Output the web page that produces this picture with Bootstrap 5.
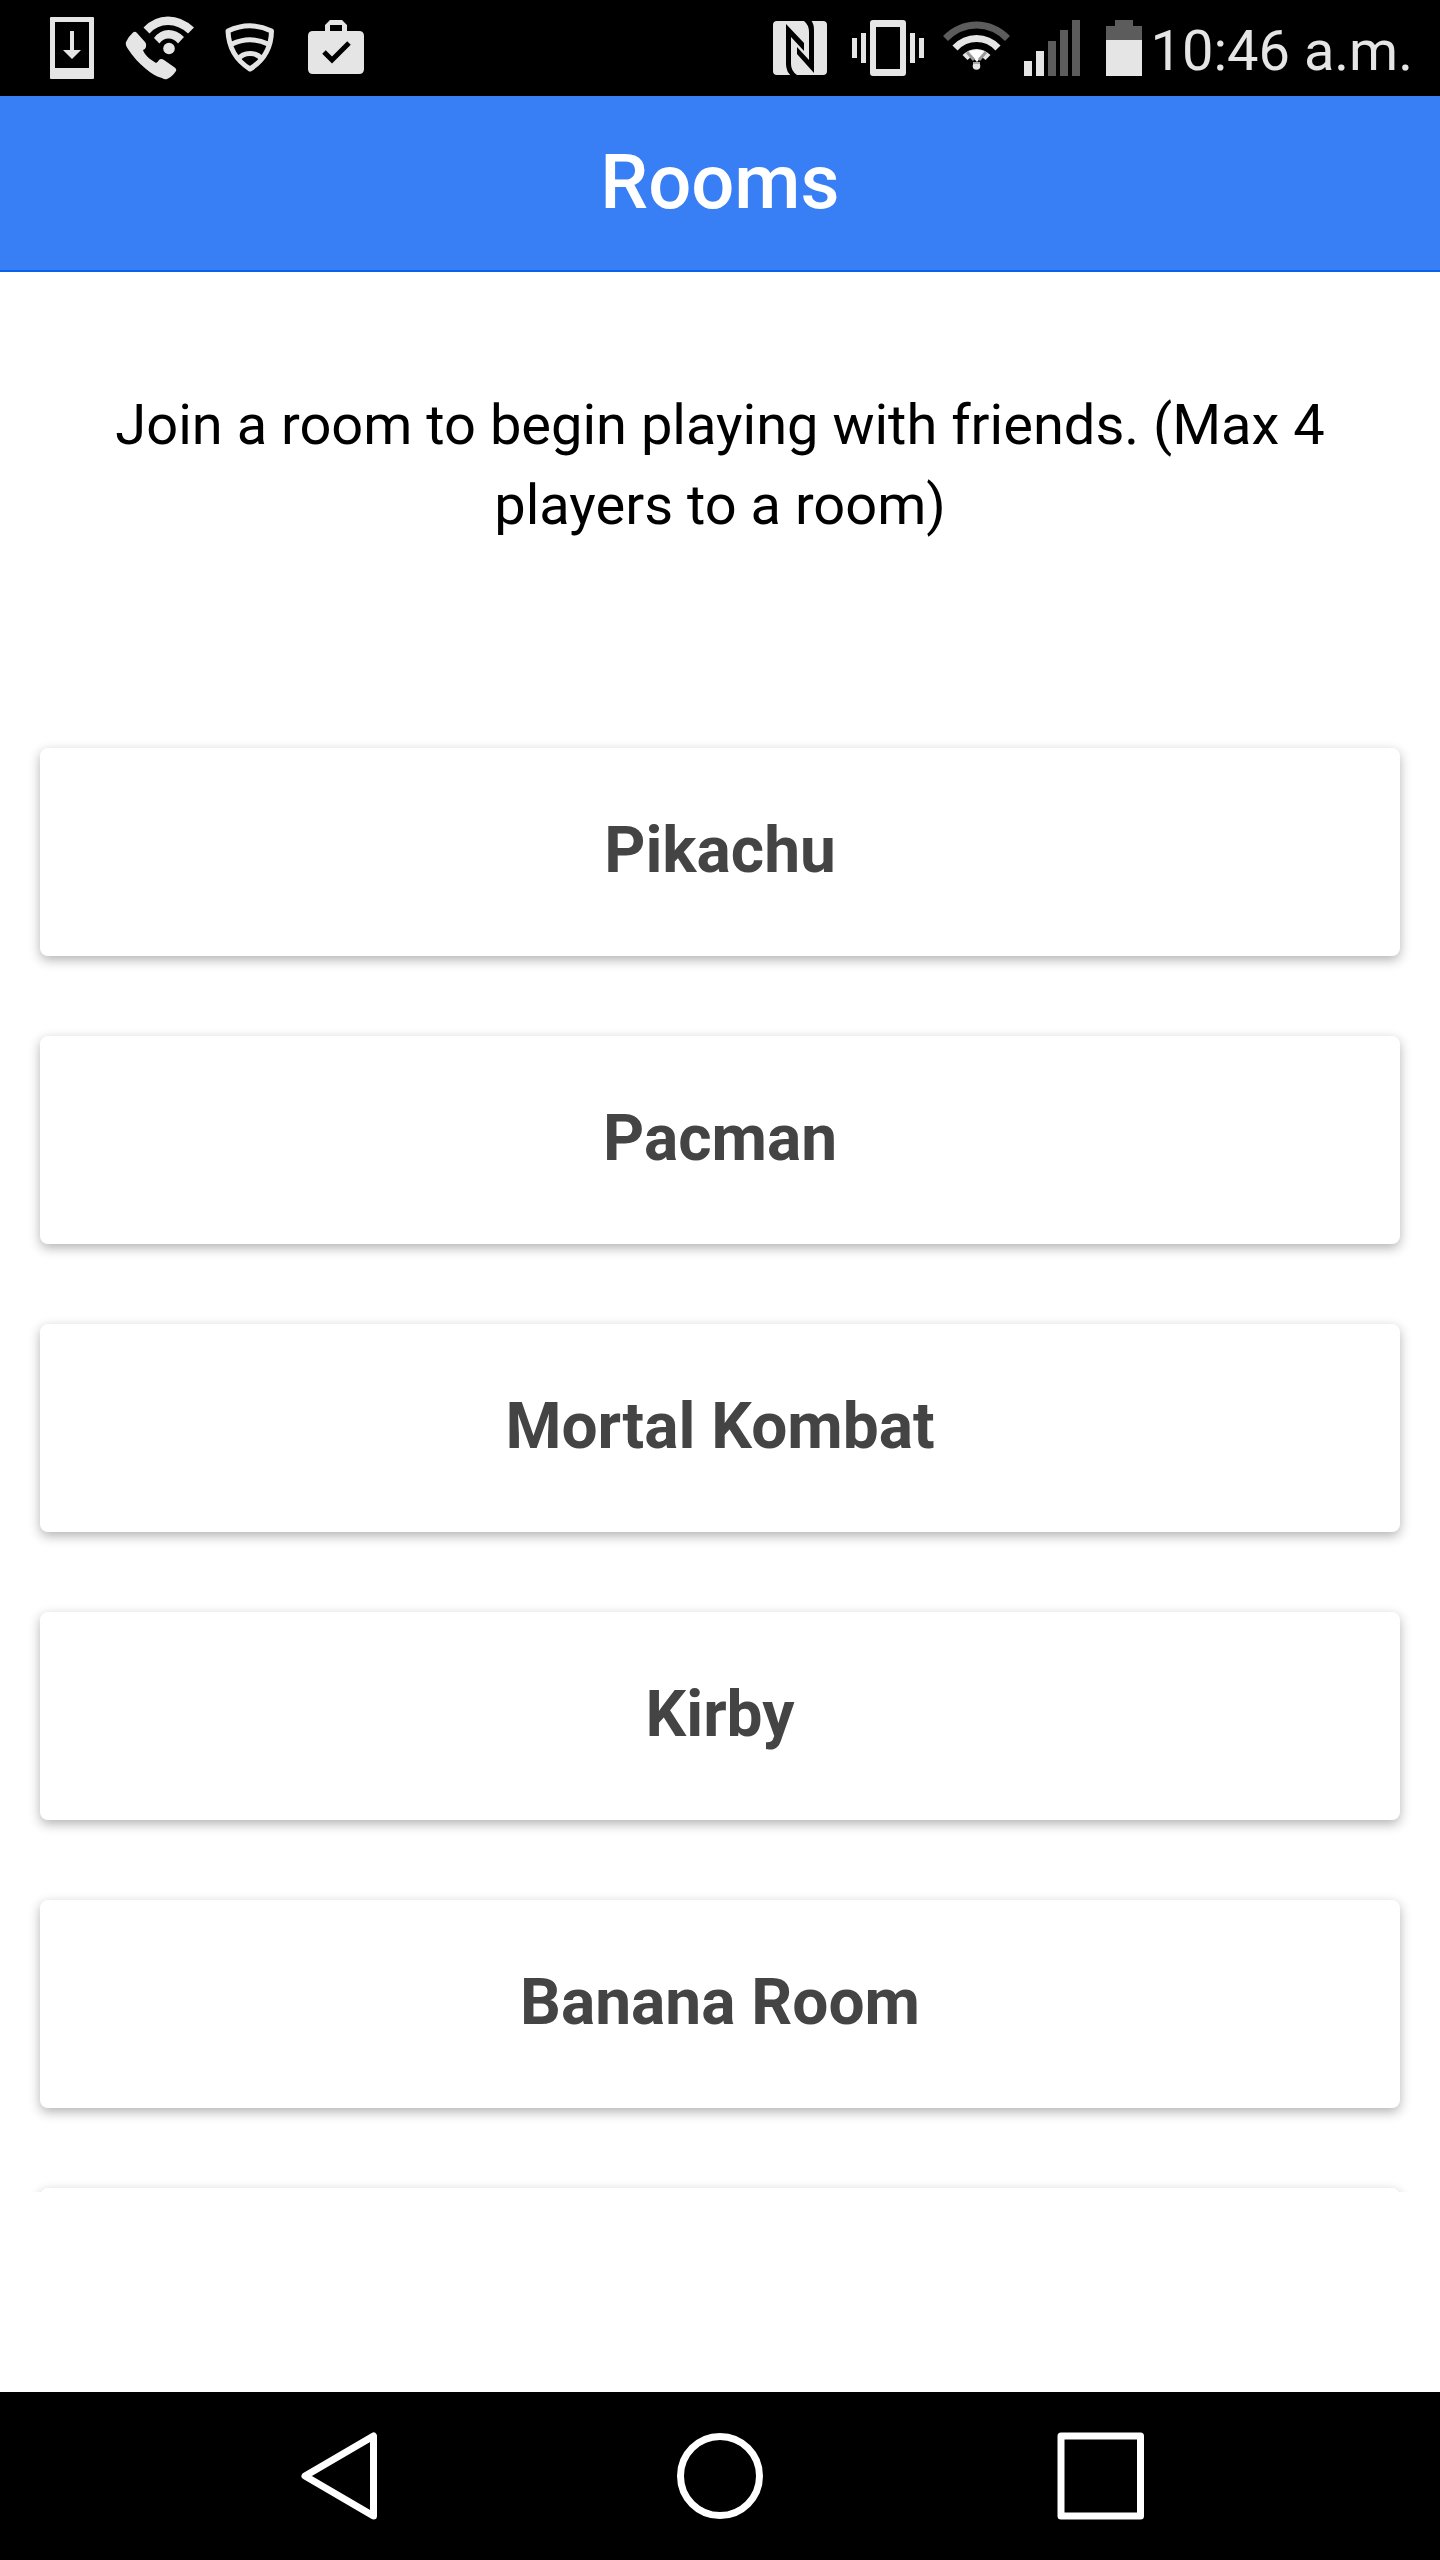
<!DOCTYPE html>
<html lang="en">
<head>
<meta charset="utf-8">
<meta name="viewport" content="width=device-width, initial-scale=1">
<title>Rooms</title>
<link href="https://cdn.jsdelivr.net/npm/bootstrap@5.3.0/dist/css/bootstrap.min.css" rel="stylesheet">
<style>
body { font-family: Roboto, "Noto Sans", sans-serif; background: #fff; color: #000; }
.status-bar { height: 96px; background: #000; color: #e5e5e5; padding: 0 27px 0 50px; }
.status-bar svg { display: block; flex: none; overflow: visible; }
.status-left { gap: 32px; }
.status-right { gap: 16px; }
.clock { font-size: 56px; line-height: 64px; margin-left: 7px; padding-top: 6px; }
.title-bar { height: 176px; background: #387ef5; border-bottom: 2px solid #0c60ee; padding-bottom: 2px; }
.page-title { font-size: 76px; line-height: 84px; font-weight: 500; color: #fff; }
.room-list { min-height: 0; }
.intro { font-size: 56px; line-height: 80px; padding: 113px 80px 203px; }
.rooms { gap: 80px; padding: 0 40px; }
.room-btn { min-height: 208px; border: 0; border-radius: 8px; background: #fff; color: #444; font-size: 64px; line-height: 80px; font-weight: 700; padding: 0 0 3px; box-shadow: 0 4px 12px rgba(0,0,0,.3); }
.blank-footer { height: 200px; background: #fff; }
.soft-keys { height: 168px; background: #000; padding: 0 284px; }
.soft-keys button { width: 112px; height: 112px; }
.soft-keys svg { display: block; fill: none; stroke: #fff; stroke-width: 7; stroke-linejoin: round; }
</style>
<script src="https://cdn.jsdelivr.net/npm/bootstrap@5.3.0/dist/js/bootstrap.bundle.min.js" defer></script>
</head>
<body class="d-flex flex-column vh-100 overflow-hidden">
<div class="status-bar d-flex align-items-center justify-content-between flex-shrink-0">
  <div class="status-left d-flex">
    <svg width="44" height="96" viewBox="50 0 44 96" fill="#e5e5e5" aria-hidden="true"><path fill-rule="evenodd" d="M51 17h42q1 0 1 1v60q0 1-1 1H51q-1 0-1-1V18q0-1 1-1zM55 22v46h34V22z"/><path d="M70 31h4v19h7l-9 9-9-9h7z"/></svg>
    <svg width="68" height="96" viewBox="126 0 68 96" fill="#e5e5e5" aria-hidden="true"><path d="M133 32.500Q135 31 137 33L145 42Q147 44 146 47Q145 50 143 50Q144 54 150 59L156 63Q158 62 159 60Q161 58 164 60L174 67Q177 69 176 71Q172 77 167 79Q165 80 162 78Q154 76 146 69Q135 60 128 49Q125 45 126 42Q128 37 133 32.500z"/><circle cx="169" cy="48.500" r="5.800"/><path d="M143.500 27.500Q154 16.500 168 16.500Q182 16.500 194 27.500L188 33.500Q179 25 168 25Q157 25 149.500 33.500zM154 38Q160 30 168.500 30Q177 30 184 37L178 43.500Q174 38.500 168.500 38.500Q163 38.500 159.500 43.500z"/></svg>
    <svg width="48" height="96" viewBox="225 0 48 96" fill="none" stroke="#e5e5e5" stroke-width="5" stroke-linejoin="round" aria-hidden="true"><path d="M227 31Q249 20.500 270.500 31Q270 56 249 69Q228 56 227 31z"/><path d="M231 44Q249 35.500 267 44M237 59.500Q241 53.500 249 53.500Q257 53.500 261 59.500"/></svg>
    <svg width="60" height="96" viewBox="306 0 60 96" aria-hidden="true"><path fill="#e5e5e5" fill-rule="evenodd" d="M313 31h12v-6l5-5h12l5 5v6h12q5 0 5 5v33q0 5-5 5h-46q-5 0-5-5V36q0-5 5-5zM330 25v6h12v-6z"/><path d="m324 52 8 8 17-17" fill="none" stroke="#000" stroke-width="5"/></svg>
  </div>
  <div class="d-flex align-items-center">
    <div class="status-right d-flex">
      <svg width="60" height="96" viewBox="772 0 60 96" aria-hidden="true"><rect x="773" y="21" width="54" height="54" rx="4" fill="#e5e5e5"/><path d="M786 24 804 43v8L791 37v27Q791 71 797 75v1h-6Q786 71 786 64zM797 47 809 60V32Q809 25 804 21v-1h7Q814 24 814 30v43L797 54z"/></svg>
      <svg width="80" height="96" viewBox="848 0 80 96" fill="#e5e5e5" aria-hidden="true"><path fill-rule="evenodd" d="M873 20h30q3 0 3 3v50q0 3-3 3h-30q-3 0-3-3V23q0-3 3-3zM876 27v42h24V27z"/><path d="M852 38h5v20h-5zM861 33h5v30h-5zM910 33h5v30h-5zM919 38h5v20h-5z"/></svg>
      <svg width="64" height="96" viewBox="944 0 64 96" fill="none" stroke-width="7" aria-hidden="true"><path stroke="#5c5c5c" d="M945.500 38.500Q959 25 976.500 25Q994 25 1007.500 38.500"/><path stroke="#e5e5e5" d="M955 48Q964 38.500 976.500 38.500Q989 38.500 998 48"/><path stroke="#e5e5e5" d="M965 57.500Q970 52.500 976.500 52.500Q983 52.500 988 57.500"/><path fill="#fff" d="M968 52Q976.500 48 985 52L977 62z"/><path stroke="#999" stroke-width="3" d="m967 52 7 8M986 52l-7 8"/><circle cx="976.500" cy="66" r="3.800" fill="#e5e5e5"/><path stroke="#aaa" stroke-width="2" d="M973 63h7"/></svg>
      <svg width="64" height="96" viewBox="1024 0 64 96" aria-hidden="true"><path fill="#e5e5e5" d="M1024 61h8v15h-8zM1036 51h8v25h-8z"/><path fill="#5c5c5c" d="M1048 41h8v35h-8zM1060 30h8v46h-8zM1072 20h8v56h-8z"/></svg>
      <svg width="40" height="96" viewBox="1104 0 40 96" aria-hidden="true"><path fill="#5c5c5c" d="M1115 20h18v6h9v14h-36V26h9z"/><path fill="#e5e5e5" d="M1106 40h36v36h-36z"/></svg>
    </div>
    <span class="clock">10:46 a.m.</span>
  </div>
</div>
<header class="title-bar d-flex align-items-center justify-content-center flex-shrink-0">
  <h1 class="page-title m-0">Rooms</h1>
</header>
<main class="room-list flex-grow-1 overflow-hidden">
  <p class="intro text-center m-0">Join a room to begin playing with friends. (Max 4 players to a room)</p>
  <div class="rooms d-flex flex-column">
    <button type="button" class="room-btn w-100">Pikachu</button>
    <button type="button" class="room-btn w-100">Pacman</button>
    <button type="button" class="room-btn w-100">Mortal Kombat</button>
    <button type="button" class="room-btn w-100">Kirby</button>
    <button type="button" class="room-btn w-100">Banana Room</button>
    <button type="button" class="room-btn w-100" aria-label="Next room"></button>
  </div>
</main>
<div class="blank-footer flex-shrink-0"></div>
<nav class="soft-keys d-flex align-items-center justify-content-between flex-shrink-0" aria-label="System">
  <button type="button" class="bg-transparent border-0 p-0" aria-label="Back"><svg width="112" height="112" viewBox="284 2420 112 112"><path d="M373.500 2436v80L305 2476z"/></svg></button>
  <button type="button" class="bg-transparent border-0 p-0" aria-label="Home"><svg width="112" height="112" viewBox="664 2420 112 112"><circle cx="720" cy="2476" r="39.500"/></svg></button>
  <button type="button" class="bg-transparent border-0 p-0" aria-label="Recent apps"><svg width="112" height="112" viewBox="1044 2420 112 112"><path d="M1061 2436h79.500v80H1061z"/></svg></button>
</nav>
</body>
</html>
